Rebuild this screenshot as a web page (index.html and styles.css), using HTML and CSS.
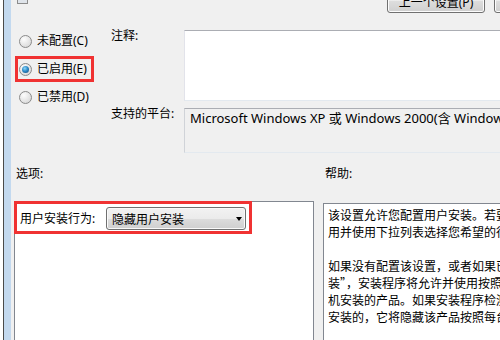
FILE: index.html
```html
<!DOCTYPE html>
<html lang="zh-CN">
  <head>
    <meta charset="UTF-8" />
    <title>用户安装行为</title>
    <link rel="stylesheet" href="styles.css">
  </head>
  <body>
    <div class="frame"></div>
    <div class="dialog">
      <div class="topbar">
        <span class="app-icon"></span>
        <div class="nav">
          <button class="btn">上一个设置(P)</button>
          <button class="btn">下一个设置(N)</button>
        </div>
      </div>

      <div class="upper">
        <div class="states">
          <label class="state"><span class="radio"></span>未配置(C)</label>
          <label class="state marked"><span class="radio on"></span>已启用(E)</label>
          <label class="state"><span class="radio"></span>已禁用(D)</label>
        </div>
        <div class="meta">
          <div class="meta-label">注释:</div>
          <div class="comment"></div>
          <div class="meta-label">支持的平台:</div>
          <div class="platform">Microsoft Windows XP 或 Windows 2000(含 Windows Installer v2.0)</div>
        </div>
      </div>

      <div class="captions">
        <div class="caption first">选项:</div>
        <div class="caption">帮助:</div>
      </div>

      <div class="lower">
        <div class="options">
          <div class="option-row">
            <span class="option-label">用户安装行为:</span>
            <div class="select">隐藏用户安装</div>
          </div>
        </div>
        <div class="help">
          <p>该设置允许您配置用户安装。若要启</p>
          <p>用并使用下拉列表选择您希望的行为。</p>
          <p class="gap"></p>
          <p>如果没有配置该设置，或者如果已启</p>
          <p>装”，安装程序将允许并使用按照每用</p>
          <p>机安装的产品。如果安装程序检测到</p>
          <p>安装的，它将隐藏该产品按照每台计算</p>
        </div>
      </div>
    </div>
  </body>
</html>
```

FILE: styles.css
```css
* {
  box-sizing: border-box;
}

body {
  margin: 0;
  width: 500px;
  height: 340px;
  overflow: hidden;
  display: flex;
  font-family: "Noto Sans", "Noto Sans CJK SC", sans-serif;
  font-size: 12px;
  color: #000;
  background-color: #f0f0f0;
}

.frame {
  flex: none;
  width: 11px;
  background: linear-gradient(to right, #fff 0 3px, #4a4a4a 3px 4px, #c3d9ef 4px 11px);
}

.dialog {
  flex: 1;
  min-width: 0;
  overflow: hidden;
  background-color: #f0f0f0;
}

/* top buttons, mostly scrolled out of view */
.topbar {
  display: flex;
  height: 28px;
  padding-left: 6px;
}

.app-icon {
  width: 11px;
  height: 4px;
  border: 1px solid #8c8c8c;
  border-top: none;
  background-color: #dfe4ea;
}

.nav {
  margin-left: auto;
  width: 113px;
  display: flex;
  gap: 9px;
}

.btn {
  flex: none;
  width: 98px;
  height: 23px;
  margin-top: -10px;
  padding: 0;
  border: 1px solid #707070;
  border-radius: 3px;
  background: linear-gradient(#f2f2f2 0, #ebebeb 50%, #dddddd 50%, #cfcfcf 100%);
  box-shadow: inset 0 0 0 1px #fcfcfc;
  font: inherit;
  color: #000;
}

.upper {
  display: flex;
  height: 125px;
}

.states {
  flex: none;
  width: 100px;
  padding-left: 4px;
  display: flex;
  flex-direction: column;
  gap: 2px;
}

.state {
  display: flex;
  align-items: center;
  gap: 5px;
  width: 79px;
  height: 26px;
  padding-left: 1px;
  border: 3px solid transparent;
  line-height: 12px;
}

.state.marked {
  border-color: #f03232;
}

.radio {
  flex: none;
  width: 13px;
  height: 13px;
  border-radius: 50%;
  border: 1px solid #8a8a8a;
  background: radial-gradient(circle at 35% 30%, #fdfdfd, #dcdcdc 75%);
  display: flex;
  align-items: center;
  justify-content: center;
}

.radio.on::after {
  content: "";
  width: 7px;
  height: 7px;
  border-radius: 50%;
  background: radial-gradient(circle at 40% 35%, #8fd8fa, #2f8cc9 45%, #0e3f73);
}

.meta {
  flex: none;
  width: 400px;
  display: grid;
  grid-template-columns: 73px 1fr;
  grid-template-rows: 71px 45px;
  row-gap: 7px;
  padding-top: 2px;
  align-items: start;
}

.meta-label {
  line-height: 12px;
}

.comment {
  height: 71px;
  background-color: #fff;
  border: 1px solid;
  border-color: #abadb3 #dbdfe6 #e3e9ef #e2e3ea;
}

.platform {
  height: 45px;
  padding: 1px 5px;
  font-size: 13px;
  line-height: 16px;
  white-space: nowrap;
  overflow: hidden;
  border: 1px solid;
  border-color: #abadb3 #dbdfe6 #e3e9ef #d0d3d8;
  background-color: #f0f0f0;
}

.captions {
  display: flex;
  gap: 9px;
  padding: 15px 0 21px;
  line-height: 12px;
}

.caption {
  flex: none;
  width: 300px;
  padding-left: 2px;
}

.caption.first {
  margin-left: 3px;
}

.lower {
  display: flex;
  align-items: flex-start;
  gap: 9px;
}

.options {
  flex: none;
  margin-left: 3px;
  width: 300px;
  height: 150px;
  border: 1px solid #828790;
  background-color: #fff;
}

.option-row {
  margin: -1px 0 0 -1px;
  width: 238px;
  height: 33px;
  padding: 3px 3px 1px 3px;
  border: 3px solid #f03232;
  display: flex;
  align-items: center;
}

.option-label {
  flex: none;
  width: 86px;
  line-height: 12px;
}

.select {
  flex: none;
  width: 140px;
  height: 23px;
  padding: 0 3px 0 5px;
  display: flex;
  align-items: center;
  justify-content: space-between;
  border: 1px solid #707070;
  border-radius: 3px;
  background: linear-gradient(#f2f2f2 0, #ebebeb 50%, #dddddd 50%, #cfcfcf 100%);
  box-shadow: inset 0 0 0 1px #fafafa;
}

.select::after {
  content: "";
  border-left: 3.5px solid transparent;
  border-right: 3.5px solid transparent;
  border-top: 4px solid #000;
}

.help {
  flex: none;
  width: 200px;
  height: 150px;
  margin-top: 2px;
  padding: 2px 0 0 4px;
  border: 1px solid #828790;
  background-color: #fff;
  font-family: "Noto Sans CJK SC", sans-serif;
  line-height: 17px;
  white-space: nowrap;
  overflow: hidden;
}

.help p {
  margin: 0;
}

.help .gap {
  height: 17px;
}
```
